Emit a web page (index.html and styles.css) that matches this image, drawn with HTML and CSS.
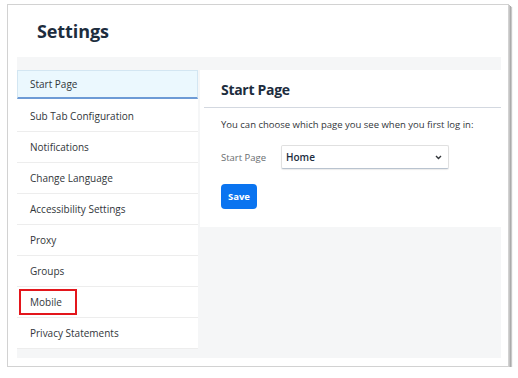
FILE: index.html
```html
<!DOCTYPE html>
<html>
<head>
<meta charset="utf-8">
<link rel="stylesheet" href="styles.css">
</head>
<body>
<div class="frame">
  <div class="page-head"><h1 class="title">Settings</h1></div>
  <div class="settings">
    <nav class="nav">
      <div class="nav-item active">Start Page</div>
      <div class="nav-item">Sub Tab Configuration</div>
      <div class="nav-item">Notifications</div>
      <div class="nav-item">Change Language</div>
      <div class="nav-item">Accessibility Settings</div>
      <div class="nav-item">Proxy</div>
      <div class="nav-item">Groups</div>
      <div class="nav-item marked">Mobile<span class="highlight"></span></div>
      <div class="nav-item">Privacy Statements</div>
    </nav>
    <section class="panel">
      <div class="panel-head"><h2 class="panel-title">Start Page</h2></div>
      <p class="intro">You can choose which page you see when you first log in:</p>
      <div class="field">
        <span class="label">Start Page</span>
        <div class="select">
          <span class="select-value">Home</span>
          <svg class="chevron" width="7" height="5" viewBox="0 0 7 5"><path d="M1 1 L3.5 3.5 L6 1" fill="none" stroke="#32363a" stroke-width="1.4"/></svg>
        </div>
      </div>
      <button class="save">Save</button>
    </section>
  </div>
</div>
</body>
</html>
```
FILE: styles.css
```css
html, body {
  margin: 0;
  padding: 0;
  background: #ffffff;
}
body {
  font-family: "Open Sans", "Noto Sans", sans-serif;
  color: #32363a;
}
.frame {
  margin: 4px 0 0 7px;
  width: 502px;
  height: 363px;
  box-sizing: border-box;
  border: 1px solid #d2d2d2;
  box-shadow: 1px 1px 0 #c4c4c4, 2px 2px 0 #ababab, 3px 3px 1px #c8c8c8;
  background: #fff;
}
.page-head {
  height: 52px;
  display: flex;
  align-items: center;
  padding-left: 29px;
}
.title {
  margin: 0;
  font-size: 18px;
  font-weight: 700;
  color: #1d2d3e;
  letter-spacing: -0.1px;
}
.settings {
  margin-left: 9px;
  width: 484px;
  background: #f5f6f7;
  padding: 13px 0 9px 0;
  display: flex;
  align-items: flex-start;
  gap: 2px;
}
.nav {
  width: 181px;
  background: #fff;
  display: flex;
  flex-direction: column;
}
.nav-item {
  position: relative;
  height: 31px;
  box-sizing: border-box;
  display: flex;
  align-items: center;
  padding-left: 13px;
  font-size: 10px;
  color: #32363a;
  border-bottom: 1px solid #ededed;
}
.nav-item.active {
  background: #ebf8fe;
  border: 1px solid #d3e6f2;
  border-bottom: 2px solid #6d9bd6;
  padding-left: 12px;
  height: 29px;
  margin-bottom: 2px;
}
.highlight {
  position: absolute;
  left: 2px;
  top: 2px;
  width: 58px;
  height: 26px;
  box-sizing: border-box;
  border: 2px solid #e3161c;
}
.panel {
  flex: 1;
  height: 157px;
  background: #fff;
}
.panel-head {
  margin-left: 4px;
  height: 38px;
  box-sizing: border-box;
  border-bottom: 1px solid #d3d8e0;
  display: flex;
  align-items: center;
  padding-left: 17px;
  padding-top: 1px;
}
.panel-title {
  margin: 0;
  font-size: 14px;
  font-weight: 700;
  color: #1d2d3e;
  letter-spacing: -0.3px;
}
.intro {
  margin: 10px 0 0 21px;
  font-size: 9.5px;
  line-height: 14px;
  color: #32363a;
}
.field {
  margin: 13px 0 0 21px;
  display: flex;
  align-items: center;
}
.label {
  width: 60px;
  font-size: 9.5px;
  color: #6a6d70;
}
.select {
  width: 168px;
  height: 24px;
  box-sizing: border-box;
  border: 1px solid #e0e0e0;
  border-bottom-color: #b9c3cf;
  border-radius: 2px;
  box-shadow: 0 1px 1px rgba(0,0,0,0.08);
  display: flex;
  align-items: center;
  justify-content: space-between;
  padding: 0 6px 0 4px;
}
.select-value {
  font-size: 10px;
  font-weight: 600;
  color: #1d2d3e;
}
.chevron {
  display: block;
}
.save {
  margin: 15px 0 0 21px;
  width: 36px;
  height: 25px;
  border: none;
  border-radius: 4px;
  background: #0a74f0;
  color: #fff;
  font-family: "Open Sans", "Noto Sans", sans-serif;
  font-size: 9.5px;
  font-weight: 700;
  padding: 0;
  display: block;
}
```
